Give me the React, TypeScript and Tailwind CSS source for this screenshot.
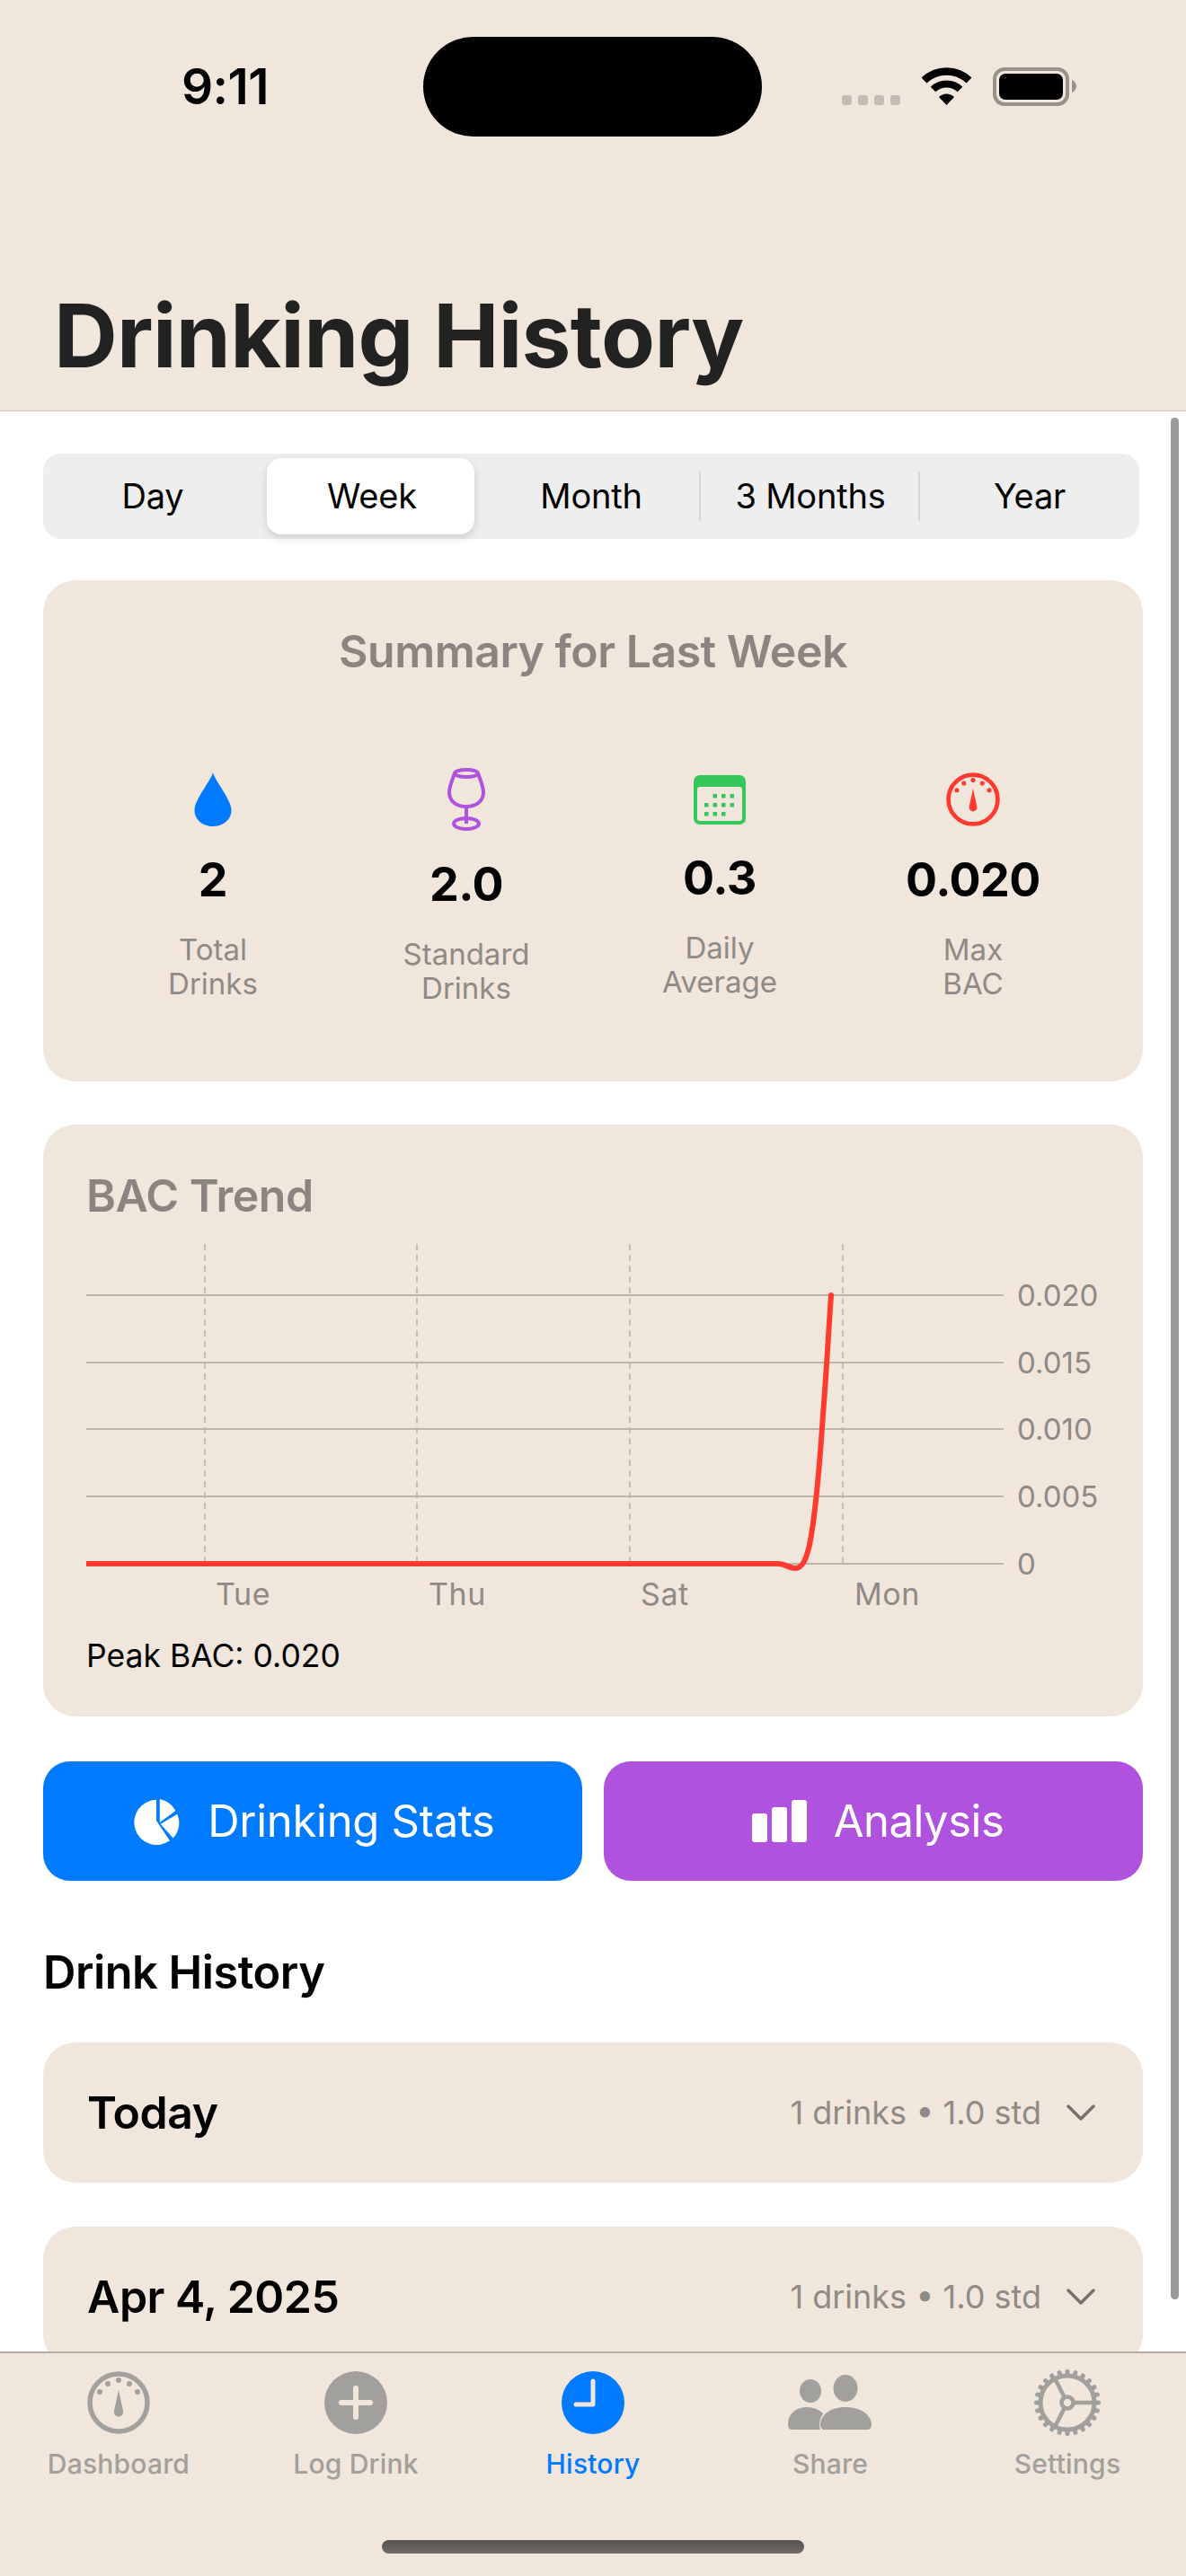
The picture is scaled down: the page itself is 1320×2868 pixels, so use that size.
const gaugeDots = [
  [-21, -12],
  [-12, -21],
  [0, -25],
  [12, -21],
  [21, -12],
]

function Gauge({ color, size }: { color: string; size: number }) {
  return (
    <svg width={size} height={size} viewBox="-35 -35 70 70">
      <circle r="32" fill="none" stroke={color} strokeWidth="5.5" />
      {gaugeDots.map(([x, y]) => (
        <circle key={x} cx={x} cy={y} r="3" fill={color} />
      ))}
      <path d="M0 -7 L-5 16 A5.2 5.2 0 1 0 5 16 Z" fill={color} transform="translate(0 -7)" />
    </svg>
  )
}

function Drop() {
  return (
    <svg width="46" height="60" viewBox="0 0 46 60">
      <path d="M23 0 C25 9 43.5 30 43.5 42 C43.5 53 34 60 23 60 C12 60 2.5 53 2.5 42 C2.5 30 21 9 23 0 Z" fill="#007aff" />
    </svg>
  )
}

function Glass() {
  return (
    <svg width="46" height="70" viewBox="0 0 46 70" fill="none" stroke="#af52de" strokeWidth="4">
      <ellipse cx="23" cy="6" rx="13" ry="4" />
      <path d="M10 6 C7 14 4 21 4 27 C4 37 12 43 23 43 C34 43 42 37 42 27 C42 21 39 14 36 6" />
      <path d="M23 43 V62" />
      <ellipse cx="23" cy="62" rx="14" ry="6" />
    </svg>
  )
}

function CalendarIcon() {
  const rows = [
    [1, 2, 3],
    [0, 1, 2, 3],
    [0, 1, 2],
  ]
  return (
    <svg width="58" height="55" viewBox="0 0 58 55">
      <rect width="58" height="55" rx="7" fill="#34c759" />
      <rect x="4" y="13" width="50" height="38" rx="3" fill="#f0e6dc" />
      {rows.map((row, r) =>
        row.map((c) => (
          <rect key={`${r}-${c}`} x={12 + c * 9.5} y={21 + r * 10} width="4.5" height="4.5" fill="#34c759" />
        )),
      )}
    </svg>
  )
}

function StatusIcons() {
  return (
    <div className="flex items-start gap-[23px]">
      <div className="mt-[31px] flex gap-[7px]">
        {[0, 1, 2, 3].map((d) => (
          <div key={d} className="h-[11px] w-[11px] rounded-[3px] bg-[#c4bbb4]" />
        ))}
      </div>
      <svg width="57" height="42" viewBox="0 0 57 42" fill="none" stroke="#000">
        <path d="M3.5 14.5 A36 36 0 0 1 53.5 14.5" strokeWidth="8.5" />
        <path d="M13.5 24.5 A21.5 21.5 0 0 1 43.5 24.5" strokeWidth="8" />
        <path d="M20 33 L28.5 42 L37 33 A12 12 0 0 0 20 33 Z" fill="#000" stroke="none" />
      </svg>
      <svg width="93" height="43" viewBox="0 0 93 43">
        <rect x="2" y="2" width="81" height="39" rx="11" fill="none" stroke="#98918a" strokeWidth="4" />
        <rect x="7" y="7" width="71" height="29" rx="7" fill="#000" />
        <path d="M88 14 C91 15 93 18 93 21 C93 24 91 27 88 28 Z" fill="#98918a" />
      </svg>
    </div>
  )
}

const stats = [
  { icon: <Drop />, value: "2", label: ["Total", "Drinks"] },
  { icon: <Glass />, value: "2.0", label: ["Standard", "Drinks"] },
  { icon: <CalendarIcon />, value: "0.3", label: ["Daily", "Average"] },
  { icon: <Gauge color="#ff3b30" size={60} />, value: "0.020", label: ["Max", "BAC"] },
]

function BacChart() {
  const rows = [57, 132, 206, 281, 356]
  const ticks = ["0.020", "0.015", "0.010", "0.005", "0"]
  const cols = [132, 368, 605, 842]
  const days = [
    ["Tue", 144],
    ["Thu", 381],
    ["Sat", 617],
    ["Mon", 855],
  ] as const
  return (
    <svg width="1128" height="410" viewBox="0 0 1128 410" className="mt-[25px] block">
      {cols.map((x) => (
        <line key={x} x1={x} x2={x} y1="0" y2="356" stroke="#b9b0a7" strokeWidth="1.5" strokeDasharray="7 5" />
      ))}
      {rows.map((y, i) => (
        <g key={y}>
          <line x1="0" x2="1021" y1={y} y2={y} stroke="#bdb4ab" strokeWidth="2" />
          <text x="1036" y={y + 12} fontSize="33" fill="#8f8a85">
            {ticks[i]}
          </text>
        </g>
      ))}
      {days.map(([d, x]) => (
        <text key={d} x={x} y="402" fontSize="34" letterSpacing="0.6" fill="#8f8a85">
          {d}
        </text>
      ))}
      <path
        d="M0 356 H770 C778 356 782 361 789 361 C797 361 801 352 805 335 C811 305 816 250 820 190 C824 140 826 100 829 57"
        fill="none"
        stroke="#ff3b30"
        strokeWidth="6"
        strokeLinecap="round"
      />
    </svg>
  )
}

function PieIcon() {
  return (
    <svg width="52" height="52" viewBox="-28 -28 56 56" fill="#fff">
      <path d="M-1 -26 V-1 L15 23 A27 27 0 1 1 -1 -26 Z" />
      <path d="M3 -27 A27 27 0 0 1 22 -13 L3 1 Z" />
      <path d="M24 -9 A27 27 0 0 1 19 20 L4 3 Z" />
    </svg>
  )
}

function BarsIcon() {
  return (
    <div className="flex h-[47px] items-end gap-[5px]">
      <div className="h-[32px] w-[17px] rounded-[3px] bg-white" />
      <div className="h-[39px] w-[17px] rounded-[3px] bg-white" />
      <div className="h-[47px] w-[17px] rounded-[3px] bg-white" />
    </div>
  )
}

function DayRow({ title }: { title: string }) {
  return (
    <div className="flex h-[156px] shrink-0 items-center rounded-[36px] bg-[#f0e6dc] pl-[49px] pr-[53px]">
      <span className="flex-1 text-[50px] font-semibold leading-[60px] tracking-[-0.5px] text-black">{title}</span>
      <span className="text-[36px] text-[#8f8a85]">1 drinks • 1.0 std</span>
      <svg width="32" height="20" viewBox="0 0 32 20" className="ml-[28px]" fill="none" stroke="#77726d" strokeWidth="3.5">
        <path d="M2 3 L16 17 L30 3" strokeLinecap="round" strokeLinejoin="round" />
      </svg>
    </div>
  )
}

const tabGray = "#a1a09d"
const tabBg = "#f0e6dc"

function PlusIcon() {
  return (
    <svg width="70" height="70" viewBox="-35 -35 70 70">
      <circle r="35" fill={tabGray} />
      <path d="M-16 0 H16 M0 -16 V16" stroke={tabBg} strokeWidth="6" strokeLinecap="round" />
    </svg>
  )
}

function ClockIcon() {
  return (
    <svg width="70" height="70" viewBox="-35 -35 70 70">
      <circle r="35" fill="#007aff" />
      <path d="M0 -24 V2 H-19" fill="none" stroke={tabBg} strokeWidth="5" strokeLinecap="round" strokeLinejoin="round" />
    </svg>
  )
}

function PeopleIcon() {
  return (
    <svg width="94" height="70" viewBox="0 0 94 70">
      <ellipse cx="25" cy="22" rx="12" ry="13" fill={tabGray} />
      <path d="M0 59 C0 47 10 40 21 40 C30 40 36 44 40 48 L36 65 H4 C1 65 0 62 0 59 Z" fill={tabGray} />
      <ellipse cx="64" cy="19" rx="13.5" ry="15" fill={tabGray} />
      <path d="M36 65 C31 50 46 36 64 36 C82 36 97 50 93 65 Z" fill={tabBg} />
      <path d="M36 59 C37 47 49 40 64 40 C79 40 92 47 93 59 C93 63 91 65 88 65 H41 C38 65 36 63 36 59 Z" fill={tabGray} />
    </svg>
  )
}

function GearIcon() {
  const teeth = Array.from({ length: 24 }, (_, i) => i * 15)
  return (
    <svg width="76" height="76" viewBox="-38 -38 76 76">
      {teeth.map((a) => (
        <rect key={a} x="-2.5" y="-37" width="5" height="9" rx="2" fill={tabGray} transform={`rotate(${a})`} />
      ))}
      <circle r="30" fill="none" stroke={tabGray} strokeWidth="5" />
      <path d="M6 0 H29 M-3 -5.5 L-14 -27 M-3 5.5 L-14 27" stroke={tabGray} strokeWidth="4.5" />
      <circle r="6.5" fill="none" stroke={tabGray} strokeWidth="4.5" />
    </svg>
  )
}

const tabs = [
  { label: "Dashboard", icon: <Gauge color={tabGray} size={70} /> },
  { label: "Log Drink", icon: <PlusIcon /> },
  { label: "History", icon: <ClockIcon />, active: true },
  { label: "Share", icon: <PeopleIcon /> },
  { label: "Settings", icon: <GearIcon /> },
]

export default function App() {
  return (
    <div className="flex h-[2868px] w-[1320px] flex-col overflow-hidden bg-white font-[Inter,sans-serif]">
      {/* Header */}
      <header className="h-[458px] shrink-0 border-b border-[#c9c1b8] bg-[#f0e6dc] pt-[41px]">
        <div className="flex h-[111px]">
          <div className="flex w-[471px] items-center justify-center pl-[30px]">
            <span className="text-[55px] font-semibold leading-none tracking-[-0.5px] text-black">9:11</span>
          </div>
          <div className="h-[111px] w-[377px] rounded-full bg-black" />
          <div className="pl-[89px] pt-[34px]">
            <StatusIcons />
          </div>
        </div>
        <h1 className="ml-[60px] mt-[167px] text-[98px] font-bold leading-[110px] tracking-[-0.7px] text-[#222222]">
          Drinking History
        </h1>
      </header>

      {/* Scrolling content */}
      <main className="relative min-h-0 flex-1 overflow-hidden">
        <div className="flex flex-col pl-[48px] pr-[48px] pt-[47px]">
          <div className="mr-[4px] grid h-[95px] grid-cols-5 rounded-[20px] bg-[#eeeeee] py-[5px]">
            {["Day", "Week", "Month", "3 Months", "Year"].map((s, i) => (
              <div key={s} className="relative flex items-center justify-center text-[38px] tracking-[-0.2px] text-black">
                {i === 1 && (
                  <div className="absolute inset-y-0 left-[5px] right-[8px] rounded-[16px] bg-white shadow-[0_4px_10px_rgba(0,0,0,0.14)]" />
                )}
                <span className="relative">{s}</span>
                {(i === 2 || i === 3) && (
                  <div className="absolute right-0 top-[15px] h-[55px] w-[2px] bg-[#d6d6d6]" />
                )}
              </div>
            ))}
          </div>

          {/* Summary */}
          <section className="mt-[46px] rounded-[36px] bg-[#f0e6dc] pb-[85px] pt-[49px]">
            <h2 className="text-center text-[50px] font-semibold leading-[60px] tracking-[-0.5px] text-[#8a8580]">
              Summary for Last Week
            </h2>
            <div className="mt-[100px] grid grid-cols-[282px_282px_282px_282px] items-center justify-center">
              {stats.map((s) => (
                <div key={s.value} className="flex flex-col items-center">
                  {s.icon}
                  <div className="mt-[30px] text-[52px] font-bold leading-[60px] tracking-[-0.5px] text-black">{s.value}</div>
                  <div className="mt-[28px] text-center text-[33px] leading-[38px] text-[#8f8a85]">
                    {s.label[0]}
                    <br />
                    {s.label[1]}
                  </div>
                </div>
              ))}
            </div>
          </section>

          {/* BAC trend */}
          <section className="mt-[48px] rounded-[36px] bg-[#f0e6dc] pb-[46px] pl-[48px] pt-[50px]">
            <h2 className="text-[50px] font-semibold leading-[58px] tracking-[-0.5px] text-[#8a8580]">BAC Trend</h2>
            <BacChart />
            <p className="mt-[28px] text-[35.5px] leading-[42px] text-black">Peak BAC: 0.020</p>
          </section>

          {/* Actions */}
          <div className="mt-[50px] grid h-[133px] grid-cols-2 gap-[24px]">
            <button className="flex items-center justify-center gap-[30px] rounded-[30px] bg-[#007aff] pl-[4px] text-[49px] tracking-[-0.3px] text-white">
              <PieIcon />
              Drinking Stats
            </button>
            <button className="flex items-center justify-center gap-[30px] rounded-[30px] bg-[#af52de] pl-[10px] text-[49px] tracking-[-0.5px] text-white">
              <BarsIcon />
              Analysis
            </button>
          </div>

          <h2 className="mt-[73px] text-[50.5px] font-semibold leading-[58px] tracking-[-0.5px] text-black">Drink History</h2>
          <div className="mt-[49px] flex flex-col gap-[49px]">
            <DayRow title="Today" />
            <DayRow title="Apr 4, 2025" />
          </div>
        </div>
        {/* scroll indicator */}
        <div className="absolute bottom-[58px] right-[8px] top-[7px] w-[9px] rounded-full bg-[#9a9a9a]" />
      </main>

      {/* Tab bar */}
      <nav className="h-[250px] shrink-0 border-t-2 border-[#b5aca3] bg-[#f0e6dc] pt-[20px]">
        <div className="grid grid-cols-5">
          {tabs.map((t) => (
            <div key={t.label} className="flex flex-col items-center">
              <div className="flex h-[70px] items-center justify-center">{t.icon}</div>
              <span
                className={
                  t.active
                    ? "mt-[15px] text-[30px] font-medium leading-[36px] tracking-[0.2px] text-[#007aff]"
                    : "mt-[15px] text-[30px] font-medium leading-[36px] tracking-[0.2px] text-[#a1a09d]"
                }
              >
                {t.label}
              </span>
            </div>
          ))}
        </div>
        <div className="mx-auto mt-[67px] h-[15px] w-[470px] rounded-full bg-gradient-to-b from-[#55514d] to-[#716c66]" />
      </nav>
    </div>
  )
}
